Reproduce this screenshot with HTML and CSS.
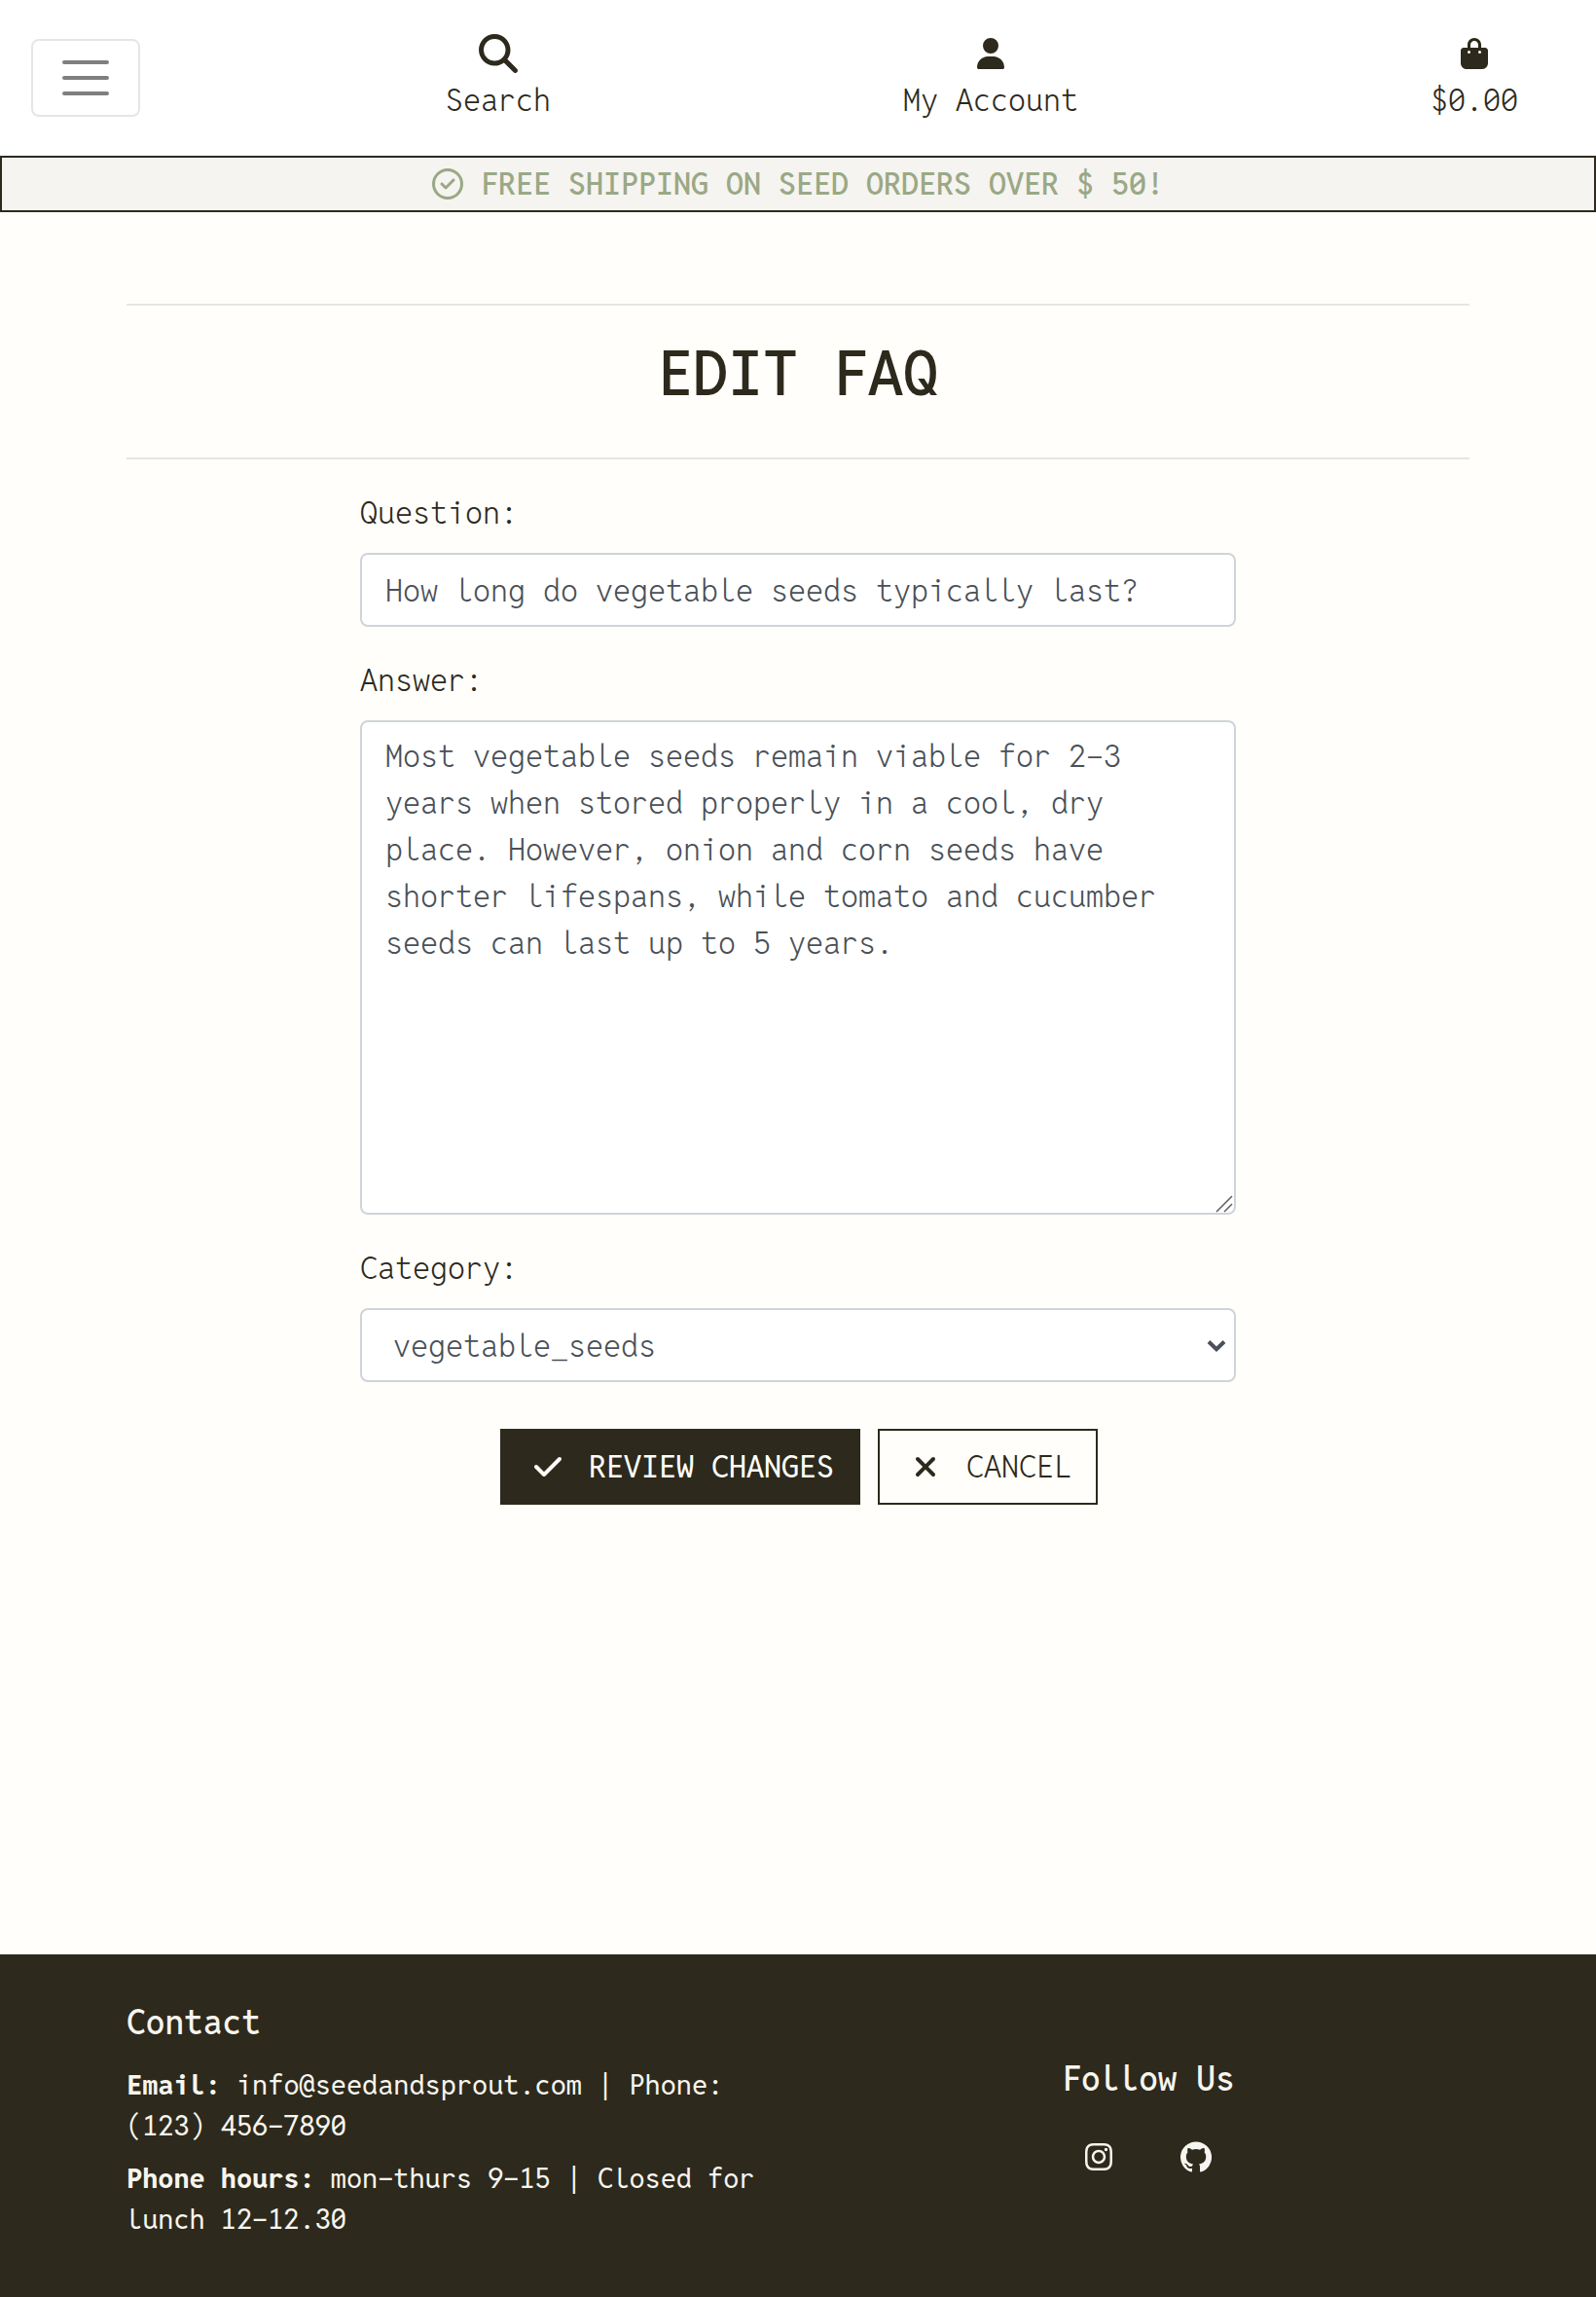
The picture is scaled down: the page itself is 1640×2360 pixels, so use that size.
FILE: index.html
```
<!DOCTYPE html>
<html lang="en">
<head>
<meta charset="utf-8">
<title>Edit FAQ</title>
<link rel="stylesheet" href="styles.css">
</head>
<body>
<header class="topbar">
  <button class="toggler" type="button" aria-label="Toggle navigation">
    <svg width="60" height="60" viewBox="0 0 30 30"><path d="M4 7h22M4 15h22M4 23h22" fill="none" stroke="rgba(0,0,0,.5)" stroke-width="2" stroke-linecap="round" stroke-miterlimit="10"/></svg>
  </button>
  <nav class="topnav">
    <a class="nav-item nav-search" href="#">
      <span class="nav-icon"><svg width="40" height="40" viewBox="0 0 512 512"><path d="M416 208c0 45.900-14.900 88.300-40 122.700L502.600 457.400c12.500 12.500 12.500 32.800 0 45.300s-32.800 12.500-45.300 0L330.700 376c-34.400 25.200-76.800 40-122.700 40C93.100 416 0 322.900 0 208S93.100 0 208 0S416 93.100 416 208zM208 352a144 144 0 1 0 0-288 144 144 0 1 0 0 288z"/></svg></span>
      <span>Search</span>
    </a>
    <a class="nav-item nav-account" href="#">
      <span class="nav-icon"><svg width="28" height="32" viewBox="0 0 448 512"><path d="M224 256A128 128 0 1 0 224 0a128 128 0 1 0 0 256zm-45.700 48C79.800 304 0 383.800 0 482.300C0 498.700 13.300 512 29.700 512H418.300c16.400 0 29.700-13.300 29.700-29.700C448 383.800 368.200 304 269.700 304H178.300z"/></svg></span>
      <span>My Account</span>
    </a>
    <a class="nav-item nav-bag" href="#">
      <span class="nav-icon"><svg width="28" height="32" viewBox="0 0 448 512"><path d="M160 112c0-35.300 28.700-64 64-64s64 28.700 64 64v48H160V112zm-48 48H48c-26.500 0-48 21.500-48 48V416c0 53 43 96 96 96H352c53 0 96-43 96-96V208c0-26.500-21.500-48-48-48H336V112C336 50.100 285.900 0 224 0S112 50.100 112 112v48zm24 48a24 24 0 1 1 0 48 24 24 0 1 1 0-48zm152 24a24 24 0 1 1 48 0 24 24 0 1 1 -48 0z"/></svg></span>
      <span>$0.00</span>
    </a>
  </nav>
</header>
<div class="banner">
  <svg width="32" height="32" viewBox="0 0 512 512"><path d="M256 48a208 208 0 1 1 0 416 208 208 0 1 1 0-416zm0 464A256 256 0 1 0 256 0a256 256 0 1 0 0 512zM369 209c9.400-9.400 9.400-24.600 0-33.900s-24.600-9.400-33.900 0l-111 111-47-47c-9.400-9.400-24.600-9.400-33.900 0s-9.400 24.600 0 33.900l64 64c9.400 9.400 24.600 9.400 33.900 0L369 209z"/></svg>
  <span>FREE SHIPPING ON SEED ORDERS OVER $ 50!</span>
</div>
<main class="page">
  <div class="title-block"><h1>EDIT FAQ</h1></div>
  <form class="faq-form">
    <label for="question">Question:</label>
    <input class="control" id="question" type="text" value="How long do vegetable seeds typically last?">
    <label for="answer">Answer:</label>
    <div class="field">
      <textarea class="control" id="answer">Most vegetable seeds remain viable for 2-3 years when stored properly in a cool, dry place. However, onion and corn seeds have shorter lifespans, while tomato and cucumber seeds can last up to 5 years.</textarea>
      <svg class="grip" width="18" height="18" viewBox="0 0 18 18"><path d="M1 17L17 1M9 17L17 9" stroke="#5c5c5c" stroke-width="1.500" fill="none"/></svg>
    </div>
    <label for="category">Category:</label>
    <div class="field">
      <select class="control" id="category"><option>vegetable_seeds</option></select>
      <svg class="chevron" width="20" height="14" viewBox="0 0 20 14"><path d="M2 2.500L10 10.200L18 2.500" fill="none" stroke="#495057" stroke-width="4"/></svg>
    </div>
    <div class="actions">
      <button class="btn btn-solid" type="button">
        <svg class="i-check" width="28" height="32" viewBox="0 0 448 512"><path d="M438.600 105.400c12.500 12.500 12.500 32.800 0 45.300l-256 256c-12.500 12.500-32.800 12.500-45.300 0l-128-128c-12.500-12.500-12.500-32.800 0-45.300s32.800-12.500 45.300 0L160 338.700 393.400 105.400c12.500-12.500 32.800-12.500 45.300 0z"/></svg>REVIEW CHANGES</button>
      <button class="btn btn-line" type="button">
        <svg class="i-cross" width="24" height="32" viewBox="0 0 384 512"><path d="M342.600 150.600c12.500-12.500 12.500-32.800 0-45.300s-32.800-12.500-45.300 0L192 210.700 86.600 105.400c-12.500-12.500-32.800-12.500-45.300 0s-12.500 32.800 0 45.300L146.700 256 41.400 361.400c-12.500 12.500-12.500 32.800 0 45.300s32.800 12.500 45.300 0L192 301.300 297.400 406.600c12.500 12.500 32.800 12.500 45.300 0s12.500-32.800 0-45.300L237.300 256 342.600 150.600z"/></svg>CANCEL</button>
    </div>
  </form>
</main>
<footer class="footer">
  <section class="contact">
    <h2>Contact</h2>
    <p><strong>Email:</strong> info@seedandsprout.com | Phone: (123) 456-7890</p>
    <p><strong>Phone hours:</strong> mon-thurs 9-15 | Closed for lunch 12-12.30</p>
  </section>
  <section class="follow">
    <h2>Follow Us</h2>
    <div class="social">
      <a href="#" aria-label="Instagram"><svg width="28" height="32" viewBox="0 0 448 512"><path d="M224.100 141c-63.600 0-114.900 51.300-114.900 114.900s51.300 114.900 114.900 114.900S339 319.500 339 255.900 287.700 141 224.100 141zm0 189.600c-41.100 0-74.700-33.500-74.700-74.700s33.500-74.700 74.700-74.700 74.700 33.500 74.700 74.700-33.600 74.700-74.700 74.700zm146.400-194.300c0 14.900-12 26.800-26.800 26.800-14.900 0-26.800-12-26.800-26.800s12-26.800 26.800-26.800 26.800 12 26.800 26.800zm76.100 27.200c-1.700-35.900-9.900-67.700-36.200-93.900-26.200-26.200-58-34.400-93.900-36.200-37-2.100-147.900-2.100-184.900 0-35.800 1.700-67.600 9.900-93.900 36.100s-34.400 58-36.200 93.900c-2.100 37-2.100 147.900 0 184.900 1.700 35.900 9.900 67.700 36.200 93.900s58 34.400 93.900 36.200c37 2.100 147.900 2.100 184.900 0 35.900-1.700 67.700-9.900 93.900-36.200 26.200-26.200 34.400-58 36.200-93.900 2.100-37 2.100-147.800 0-184.800zM398.800 388c-7.800 19.600-22.900 34.700-42.600 42.600-29.500 11.700-99.500 9-132.100 9s-102.700 2.600-132.100-9c-19.600-7.800-34.700-22.900-42.600-42.600-11.700-29.500-9-99.500-9-132.100s-2.600-102.700 9-132.100c7.800-19.600 22.900-34.700 42.600-42.600 29.500-11.700 99.500-9 132.100-9s102.700-2.600 132.100 9c19.600 7.800 34.700 22.900 42.600 42.600 11.700 29.500 9 99.500 9 132.100s2.700 102.700-9 132.100z"/></svg></a>
      <a href="#" aria-label="GitHub"><svg width="32" height="32" viewBox="0 0 16 16"><path d="M8 .2a8 8 0 0 0-2.530 15.590c.4.070.55-.17.55-.38 0-.19-.01-.82-.01-1.490-2.010.37-2.530-.49-2.690-.94-.09-.23-.48-.94-.82-1.130-.28-.15-.68-.52-.01-.53.63-.01 1.080.58 1.230.82.72 1.210 1.870.87 2.330.66.070-.52.28-.87.51-1.070-1.780-.2-3.640-.89-3.640-3.950 0-.87.31-1.590.82-2.150-.080-.2-.36-1.020.080-2.120 0 0 .67-.21 2.200.82a7.600 7.600 0 0 1 4 0c1.530-1.040 2.200-.82 2.200-.82.44 1.100.16 1.920.080 2.120.51.560.82 1.270.82 2.150 0 3.070-1.870 3.750-3.650 3.950.29.250.54.730.54 1.480 0 1.070-.01 1.930-.01 2.200 0 .21.150.46.55.38A8 8 0 0 0 8 .2z"/></svg></a>
    </div>
  </section>
</footer>
</body>
</html>
```
FILE: styles.css
```
* { box-sizing: border-box; }

body {
  margin: 0;
  min-height: 2360px;
  display: flex;
  flex-direction: column;
  background: #fffefa;
  color: #2d291c;
  font: 350 32px/48px "Reddit Mono", "DejaVu Sans Mono", monospace;
}

svg { display: block; fill: currentColor; flex: none; }
a { color: inherit; text-decoration: none; }
h1, h2, p { margin: 0; }

.topbar {
  height: 160px;
  padding-left: 32px;
  display: flex;
  align-items: center;
  background: #fff;
}
.toggler {
  width: 112px;
  height: 80px;
  padding: 8px 24px;
  border: 2px solid rgba(0, 0, 0, .1);
  border-radius: 8px;
  background: none;
  display: flex;
  align-items: center;
  justify-content: center;
}
.topnav {
  flex: 1;
  display: flex;
  justify-content: space-between;
  padding: 0 80px 3px 314px;
}
.nav-item {
  display: flex;
  flex-direction: column;
  align-items: center;
}
.nav-icon {
  height: 48px;
  display: flex;
  align-items: center;
}
.nav-search .nav-icon { padding-top: 1px; }

.banner {
  height: 58px;
  border: 2px solid #2d291c;
  background: #f5f4f0;
  color: #9aa886;
  display: flex;
  align-items: center;
  justify-content: center;
  gap: 18px;
  font-weight: 550;
}

.page { flex: 1; padding: 94px 130px 0; }
.title-block {
  height: 160px;
  border-top: 2px solid #e5e5e1;
  border-bottom: 2px solid #e5e5e1;
  padding-top: 31px;
  text-align: center;
}
h1 { font-size: 64px; line-height: 77px; font-weight: 500; }

.faq-form {
  width: 900px;
  margin: 31px auto 0;
  display: flex;
  flex-direction: column;
}
.faq-form label { margin-bottom: 17px; }
.field { position: relative; display: flex; }
.control {
  width: 100%;
  height: 76px;
  margin: 0 0 31px;
  padding: 12px 24px;
  border: 2px solid #ced4da;
  border-radius: 8px;
  background: #fff;
  color: #495057;
  font: inherit;
  appearance: none;
  outline: none;
}
textarea.control { height: 508px; padding-top: 11px; resize: none; overflow: hidden; }
select.control { padding: 13px 24px 11px 32px; margin-bottom: 0; }
.grip { position: absolute; right: 3px; bottom: 33px; }
.chevron { position: absolute; right: 10px; top: 32px; }

.actions {
  display: flex;
  justify-content: center;
  gap: 18px;
  margin-top: 48px;
  padding-left: 2px;
}
.btn {
  height: 78px;
  padding: 0 25px;
  border: 2px solid #2d291c;
  display: flex;
  align-items: center;
  font: inherit;
}
.btn-solid { background: #2d291c; color: #fffefa; font-weight: 430; padding-left: 33px; }
.btn-line { background: transparent; color: #2d291c; padding-left: 35px; }
.i-check { margin-right: 28px; }
.i-cross { margin-right: 30px; }

.footer {
  height: 352px;
  padding: 49px 130px 0;
  display: flex;
  background: #2d291c;
  color: #f7f5ef;
}
.contact { width: 690px; padding-right: 30px; }
.footer h2 { font-size: 35px; line-height: 42px; font-weight: 550; }
.contact h2 { margin-bottom: 22px; }
.contact p { font-size: 28.700px; line-height: 42px; font-weight: 430; margin-bottom: 12px; }
.contact strong { font-weight: 750; }
.follow {
  flex: 1;
  padding: 58px 0 0 30px;
  display: flex;
  flex-direction: column;
  align-items: center;
}
.social { display: flex; gap: 70px; margin-top: 43px; }
```
